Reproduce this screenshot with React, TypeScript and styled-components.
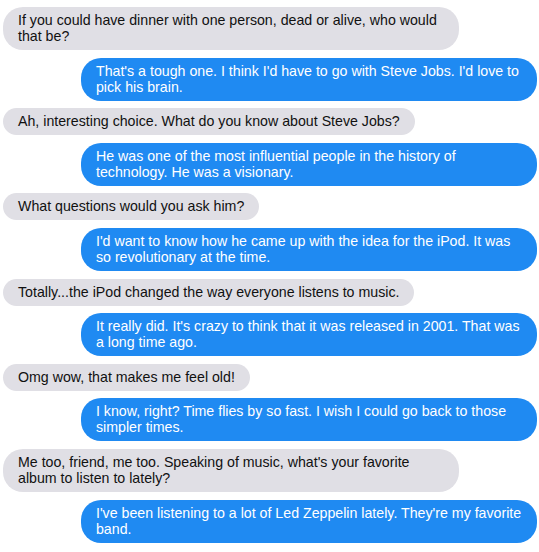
import React from "react";
import styled, { createGlobalStyle } from "styled-components";

const Global = createGlobalStyle`
  html, body { margin: 0; padding: 0; background: #ffffff; }
  body { font-family: "Liberation Sans", Arial, Helvetica, sans-serif; }
`;

const Thread = styled.div`
  display: flex;
  flex-direction: column;
  gap: 7.6px;
  padding: 7px 2px 8px 3px;
`;

const Bubble = styled.div<{ $mine: boolean }>`
  align-self: ${(p) => (p.$mine ? "flex-end" : "flex-start")};
  max-width: 85.4%;
  box-sizing: border-box;
  padding: 5px 15px 6px 15px;
  border-radius: 20px;
  font-size: 14.2px;
  line-height: 16px;
  background: ${(p) => (p.$mine ? "#1f8af2" : "#e0dfe5")};
  color: ${(p) => (p.$mine ? "#ffffff" : "#111111")};
`;

const messages: { mine: boolean; text: string }[] = [
  { mine: false, text: "If you could have dinner with one person, dead or alive, who would that be?" },
  { mine: true, text: "That's a tough one. I think I'd have to go with Steve Jobs. I'd love to pick his brain." },
  { mine: false, text: "Ah, interesting choice. What do you know about Steve Jobs?" },
  { mine: true, text: "He was one of the most influential people in the history of technology. He was a visionary." },
  { mine: false, text: "What questions would you ask him?" },
  { mine: true, text: "I'd want to know how he came up with the idea for the iPod. It was so revolutionary at the time." },
  { mine: false, text: "Totally...the iPod changed the way everyone listens to music." },
  { mine: true, text: "It really did. It's crazy to think that it was released in 2001. That was a long time ago." },
  { mine: false, text: "Omg wow, that makes me feel old!" },
  { mine: true, text: "I know, right? Time flies by so fast. I wish I could go back to those simpler times." },
  { mine: false, text: "Me too, friend, me too. Speaking of music, what's your favorite album to listen to lately?" },
  { mine: true, text: "I've been listening to a lot of Led Zeppelin lately. They're my favorite band." },
];

export default function App() {
  return (
    <>
      <Global />
      <Thread>
        {messages.map((m, i) => (
          <Bubble key={i} $mine={m.mine}>
            {m.text}
          </Bubble>
        ))}
      </Thread>
    </>
  );
}
